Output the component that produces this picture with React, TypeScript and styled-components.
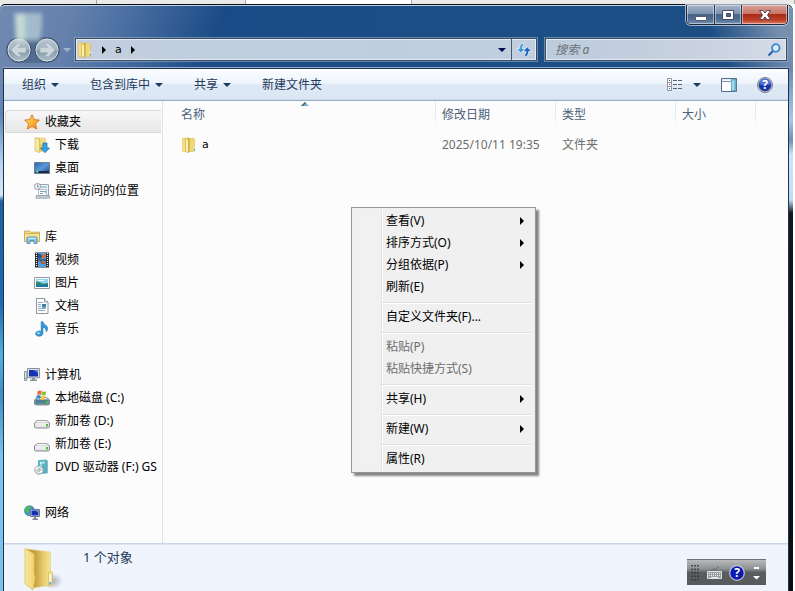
import React from "react";
import styled, { createGlobalStyle, css } from "styled-components";

const GlobalStyle = createGlobalStyle`
  * { box-sizing: border-box; }
  html, body { margin: 0; padding: 0; }
  body {
    background: #ffffff;
    color: #000;
    font: 12px/16px "Noto Sans", "Noto Sans CJK SC", sans-serif;
    overflow: hidden;
  }
  button, input { font: inherit; color: inherit; margin: 0; padding: 0; border: 0; background: none; }
  svg { display: block; flex: none; }
  ul { list-style: none; margin: 0; padding: 0; }
`;

/* ---------- frame ---------- */

const Page = styled.div`
  display: flex;
  flex-direction: column;
  height: 100vh;
`;

const TabStrip = styled.div`
  display: flex;
  height: 4px;
  flex: none;
  background: #e2e2e0;
`;

const StripTab = styled.div<{ $grow: number; $active?: boolean }>`
  flex: ${(p) => p.$grow} 1 0;
  border-right: 1px solid #a5a5a5;
  background: ${(p) => (p.$active ? "#ffffff" : "#e9e9e7")};
`;

const WindowFrame = styled.div`
  position: relative;
  flex: 1;
  min-height: 0;
  display: flex;
  flex-direction: column;
  margin-right: 2px;
  padding: 0 4px 0 3px;
  border-top: 1px solid #060d18;
  border-radius: 5px 7px 0 0;
  box-shadow: inset 0 1px 0 #c4d5e6;
  background:
    linear-gradient(to bottom, transparent 64px, #6c8ab0 64px, #5f86b4 110px, #b9d5f2 160px, #d5e8fa 190px, #1d60a0 196px, #1d6cb0 300px, #54b0de 350px, #3d8fc4 390px, #78c4ea 450px, #78c4ea) left / 3px 100% no-repeat,
    linear-gradient(to bottom, transparent 64px, #6d8bb0 64px, #a9c8e8 115px, #6d90b8 135px, #cfe4fa 150px, #c2dcf5 195px, #101820 208px, #0a0f14) right / 4px 100% no-repeat,
    linear-gradient(65deg, transparent 62%, rgba(150, 165, 190, 0.75) 90%) right top / 220px 68px no-repeat,
    linear-gradient(108deg, #7089b0 0, #6681ac 70px, #4a6fa2 125px, #1b4b86 215px, #1c4f86 60%, #1b4c80 100%);
`;

const GlassGhost = styled.svg`
  position: absolute;
  left: 8px;
  top: 6px;
  filter: blur(2px);
`;

const TitleBar = styled.div`
  display: flex;
  justify-content: flex-end;
  height: 32px;
  flex: none;
`;

const CaptionGroup = styled.div`
  display: flex;
  height: 20px;
  margin-right: 1px;
  border: 1px solid #1d2a3d;
  border-top: 0;
  border-radius: 0 0 5px 5px;
  overflow: hidden;
  box-shadow: 0 0 0 1px rgba(215, 228, 242, 0.7);
`;

const CaptionButton = styled.button<{ $close?: boolean }>`
  display: flex;
  align-items: center;
  justify-content: center;
  width: ${(p) => (p.$close ? 46 : 27)}px;
  box-shadow: inset 0 0 0 1px rgba(255, 255, 255, 0.45);
  background: ${(p) =>
    p.$close
      ? "linear-gradient(#d9a299, #c87466 45%, #a92c18 50%, #bd4026 80%, #dd8266)"
      : "linear-gradient(#a5b5c9, #7d93af 45%, #48658a 50%, #4d6c91 75%, #7893b2)"};
  & + & { border-left: 1px solid #24364f; }
`;

const AddressRow = styled.div`
  display: flex;
  align-items: center;
  height: 25px;
  margin-bottom: 6px;
  padding-left: 3px;
  flex: none;
`;

const NavButtons = styled.div`
  display: flex;
  align-items: center;
  gap: 2px;
  border-radius: 13px;
  background: rgba(40, 62, 95, 0.35);
  margin-right: 3px;
`;

const RoundButton = styled.button`
  width: 26px;
  height: 26px;
  padding: 0;
`;

const RecentButton = styled.button`
  width: 9px;
  margin-right: 3px;
`;

const GlassField = styled.div<{ $grow: number }>`
  display: flex;
  align-items: stretch;
  flex: ${(p) => p.$grow} 1 0;
  min-width: 0;
  height: 23px;
  border: 1px solid #3a4c63;
  box-shadow: inset 0 0 0 1px #e4ebf2, 0 0 0 1px rgba(160, 185, 210, 0.55);
  background: linear-gradient(to right, #c4cede, #bfcfdf 35%, #c0cede);
`;

const SearchField = styled(GlassField)`
  margin-left: 8px;
  margin-right: 2px;
  padding: 0 5px 0 9px;
  align-items: center;
  background: linear-gradient(to right, #bccbdc, #c8d1df 60%, #d5dbe7);
`;

const SearchInput = styled.input`
  flex: 1;
  min-width: 0;
  outline: 0;
  &::placeholder { color: #6c7076; opacity: 1; font-style: italic; }
`;

const Crumbs = styled.nav`
  display: flex;
  align-items: center;
  flex: 1;
  padding-left: 1px;
  gap: 9px;
`;

const Crumb = styled.button`
  display: flex;
  align-items: center;
  font-family: "DejaVu Sans", sans-serif;
  font-size: 11px;
`;

const FieldButton = styled.button<{ $divided?: boolean }>`
  display: flex;
  align-items: center;
  justify-content: center;
  width: ${(p) => (p.$divided ? 25 : 18)}px;
  border-left: ${(p) => (p.$divided ? "1px solid #4b5a70" : "0")};
`;

/* ---------- client area ---------- */

const Client = styled.div`
  flex: 1;
  min-height: 0;
  display: flex;
  flex-direction: column;
  border: 1px solid #22324b;
  border-bottom: 0;
  background: #fcfcfc;
  box-shadow: 0 -1px 0 #93aed0;
`;

const Toolbar = styled.div`
  display: flex;
  align-items: center;
  height: 32px;
  flex: none;
  padding: 0 15px 0 18px;
  gap: 31px;
  border-bottom: 1px solid #9aaccb;
  box-shadow: inset 0 -1px 0 #ccd9ea;
  background: linear-gradient(#fbfdff, #edf4fc 47%, #dfe9f6 50%, #dbe6f4);
  color: #1e395b;
`;

const ToolButton = styled.button`
  display: flex;
  align-items: center;
  gap: 5px;
  white-space: nowrap;
`;

const ToolTail = styled.div`
  display: flex;
  align-items: center;
  gap: 20px;
  margin-left: auto;
`;

const ViewButton = styled(ToolButton)`
  gap: 10px;
`;

const Panes = styled.div`
  display: flex;
  flex: 1;
  min-height: 0;
`;

const Sidebar = styled.nav`
  display: flex;
  flex-direction: column;
  gap: 23px;
  width: 159px;
  flex: none;
  padding: 9px 1px 0 1px;
  border-right: 1px solid #d6e5f5;
  overflow: hidden;
`;

const NavLink = styled.a<{ $child?: boolean; $current?: boolean }>`
  display: flex;
  align-items: center;
  gap: 5px;
  height: 23px;
  padding-left: ${(p) => (p.$child ? 29 : 19)}px;
  color: #000;
  text-decoration: none;
  white-space: nowrap;
  overflow: hidden;
  ${(p) =>
    p.$current &&
    css`
      border-radius: 3px 0 0 3px;
      box-shadow: inset 1px 1px 0 #d9d9d9, inset 0 -1px 0 #d9d9d9;
      background: linear-gradient(#f8f8f8, #e6e6e6);
    `}
`;

const FilePane = styled.main`
  flex: 1;
  min-width: 0;
`;

const FileTable = styled.table`
  width: 100%;
  table-layout: fixed;
  border-collapse: collapse;
`;

const Col = styled.col<{ $w?: number }>`
  width: ${(p) => (p.$w ? `${p.$w}px` : "auto")};
`;

const HeadCell = styled.th<{ $first?: boolean }>`
  height: 28px;
  padding: 0 0 0 ${(p) => (p.$first ? 18 : 7)}px;
  text-align: left;
  font-weight: 400;
  color: #4c607a;
  background: ${(p) =>
    p.$first ? "none" : "linear-gradient(#dce8f5, #e4edf7 70%, #fcfcfc) left top / 1px 24px no-repeat"};
`;

const SortLabel = styled.div`
  display: grid;
  grid-template-columns: 1fr auto 1fr;
  align-items: start;
  height: 28px;
  margin-left: -6px;
  & > span { padding: 6px 0 0 6px; }
  & > svg { margin-top: 1px; }
`;

const DataCell = styled.td<{ $first?: boolean }>`
  height: 32px;
  padding: 0 0 0 ${(p) => (p.$first ? 18 : 7)}px;
  color: ${(p) => (p.$first ? "#000" : "#6d6d6d")};
  white-space: nowrap;
`;

const FileName = styled.a`
  display: flex;
  align-items: center;
  gap: 5px;
  color: #000;
  text-decoration: none;
  font-family: "DejaVu Sans", sans-serif;
  font-size: 11px;
`;

const StatusBar = styled.footer`
  display: flex;
  align-items: flex-start;
  height: 48px;
  flex: none;
  padding: 3px 22px 0 18px;
  border-top: 1px solid #cad6e7;
  box-shadow: inset 0 1px 0 #dde6f2;
  background: #f0f4fc;
  color: #1e395b;
  font-size: 13px;
  line-height: 20px;
  overflow: hidden;
`;

const StatusText = styled.span`
  margin-left: 19px;
`;

const LanguageBar = styled.div`
  display: flex;
  align-items: center;
  gap: 7px;
  width: 79px;
  height: 26px;
  margin: 12px 0 0 auto;
  padding: 0 6px 0 4px;
  border-top: 1px solid #6f7375;
  background: linear-gradient(#b8babb, #8f9293 35%, #5a5e60 50%, #565a5c);
`;

const LanguageButton = styled.button`
  display: flex;
  &:last-child { margin-left: auto; }
`;

/* ---------- context menu ---------- */

const ContextMenu = styled.div`
  position: absolute;
  left: 351px;
  top: 202px;
  width: 185px;
  padding: 2px;
  border: 1px solid #979797;
  background: linear-gradient(to right, #f1f1f1 27px, #e2e3e3 27px, #e2e3e3 28px, #ffffff 28px, #ffffff 29px, #f0f0f0 29px);
  background-origin: content-box;
  background-clip: padding-box;
  background-repeat: no-repeat;
  background-color: #f0f0f0;
  box-shadow: 3px 3px 2px rgba(0, 0, 0, 0.48);
`;

const MenuItem = styled.button`
  display: flex;
  align-items: center;
  justify-content: space-between;
  width: 100%;
  height: 22px;
  padding: 0 9px 0 32px;
  text-align: left;
  white-space: nowrap;
  &:disabled { color: #6d6d6d; }
`;

const MenuRule = styled.hr`
  height: 8px;
  margin: 0 0 0 28px;
  border: 0;
  background: linear-gradient(transparent 4px, #e0e0e0 4px, #e0e0e0 5px, #ffffff 5px, #ffffff 6px, transparent 6px);
`;

/* ---------- drawings ---------- */

const Down = ({ w = 8, fill = "#1e395b" }: { w?: number; fill?: string }) => (
  <svg width={w} height="4" viewBox="0 0 8 4" aria-hidden>
    <path d="M0 0h8L4 4z" fill={fill} />
  </svg>
);

const Right = ({ fill = "#000" }: { fill?: string }) => (
  <svg width="4" height="8" viewBox="0 0 4 8" aria-hidden>
    <path d="M0 0v8l4-4z" fill={fill} />
  </svg>
);

const FolderIcon = ({ size = 16 }: { size?: number }) => (
  <svg width={size} height={size} viewBox="0 0 16 16" aria-hidden>
    <path d="M1.500 1.200 7 .8v14.400l-5.500-1z" fill="#f4df83" stroke="#d9bd55" strokeWidth=".5" />
    <path d="M7 1l6.500.4v12.800l-6.500 1z" fill="#c9a741" />
    <path d="M4.500 1.500 7.500 3v12.700l-3-1.400z" fill="#fff1a9" stroke="#b99835" strokeWidth=".5" />
    <path d="M8.600 1.200l4.700.4v12.500l-4.700.9z" fill="#efd776" />
    <path d="M12.700 9.500h1.600v4.300l-1.600.4z" fill="#f8e8a0" />
    <path d="M12.800 11.800H14v2h-1.200z" fill="#4ca8e4" />
  </svg>
);

const Circle = ({ flip }: { flip?: boolean }) => {
  const id = flip ? "fwd" : "back";
  return (
    <svg width="26" height="26" viewBox="0 0 26 26" aria-hidden>
      <defs>
        <linearGradient id={id} x1="0" y1="0" x2="0" y2="1">
          <stop offset="0" stopColor="#bcc8d2" />
          <stop offset=".48" stopColor="#a3b3c0" />
          <stop offset=".52" stopColor="#8498a9" />
          <stop offset="1" stopColor="#b0c2cb" />
        </linearGradient>
      </defs>
      <circle cx="13" cy="13" r="12" fill={`url(#${id})`} stroke="#374b67" />
      <circle cx="13" cy="13" r="11" fill="none" stroke="#dce5eb" strokeOpacity=".8" />
      <path
        d="M5 13 11.500 6.500h3.900L12 10.500h8v5h-8l3.400 4h-3.900z"
        fill="#ccd6dc"
        stroke="#a3b3bf"
        strokeWidth=".6"
        transform={flip ? "matrix(-1 0 0 1 26 0)" : undefined}
      />
    </svg>
  );
};

const RefreshIcon = () => (
  <svg width="16" height="16" viewBox="0 0 16 16" aria-hidden>
    <path d="M3.500 6.500C3.500 3.500 4.800 1.600 7.500 1v2.300C6.500 4 6.300 5 6.300 6.500h2.900L5 11.200.6 6.500z" fill="#3e9bd8" stroke="#eff6fb" strokeWidth=".7" />
    <path d="M12.700 9.500c0 3-1.300 4.900-4 5.500v-2.300c1-.7 1.200-1.700 1.200-3.200H7L11.200 4.800l4.400 4.700z" fill="#2464ba" stroke="#eff6fb" strokeWidth=".7" />
  </svg>
);

const SearchIcon = () => (
  <svg width="14" height="14" viewBox="0 0 14 14" fill="none" aria-hidden>
    <path d="M6.500 7.500 1.500 12.500" stroke="#2b5fae" strokeWidth="2.2" />
    <circle cx="8.800" cy="5" r="3.800" fill="#dceaf6" stroke="#3a8bd0" strokeWidth="1.800" />
  </svg>
);

const MinimizeIcon = () => (
  <svg width="14" height="14" viewBox="0 0 14 14" aria-hidden>
    <rect x="1.500" y="8.500" width="11" height="4" rx=".5" fill="#fff" stroke="#545870" />
  </svg>
);

const MaximizeIcon = () => (
  <svg width="14" height="14" viewBox="0 0 14 14" aria-hidden>
    <path d="M1.500 2.500h11v9h-11zM5.500 5.500v3h4v-3z" fill="#fff" fillRule="evenodd" stroke="#454c65" />
  </svg>
);

const CloseIcon = () => (
  <svg width="14" height="12" viewBox="0 0 14 12" aria-hidden>
    <path d="M1.500 1.500h3.500L7 4l2-2.500h3.500L9.500 6l3 4.500H9L7 8l-2 2.500H1.500L4.500 6z" fill="#fff" stroke="#5b4656" />
  </svg>
);

const ViewIcon = () => (
  <svg width="16" height="14" viewBox="0 0 16 14" fill="none" aria-hidden>
    <path d="M.5.5h4v4h-4zM.5 4.500h4v4h-4zM.5 8.500h4v4h-4z" fill="#fff" stroke="#8b95a3" />
    <path d="M2 2h1v1H2z" fill="#2f7f50" />
    <path d="M2 6h1v1H2z" fill="#c72b26" />
    <path d="M2 10h1v1H2z" fill="#276ba8" />
    <path d="M6 2.500h4M11 2.500h4M6 6.500h4M11 6.500h4M6 10.500h4M11 10.500h4" stroke="#56647a" />
  </svg>
);

const PreviewIcon = () => (
  <svg width="16" height="14" viewBox="0 0 16 14" aria-hidden>
    <path d="M.5.5h15v13H.5z" fill="#fff" stroke="#566d8b" />
    <path d="M1 1h14v1.500H1z" fill="#e0ebf4" />
    <path d="M1 3.500h9" stroke="#7f95ad" />
    <path d="M10.500 1.500h4.500v11.500h-4.500z" fill="#78c4de" stroke="#4f91ac" strokeWidth=".7" />
    <path d="M11.500 3h1.200v9h-1.200z" fill="#bde8f3" />
  </svg>
);

const QuestionMark = styled.text`
  font: 700 12px "Noto Sans", sans-serif;
  fill: #fff;
  text-anchor: middle;
`;

const HelpIcon = ({ rim = "#7c828e" }: { rim?: string }) => (
  <svg width="16" height="16" viewBox="0 0 16 16" aria-hidden>
    <circle cx="8" cy="8" r="7.500" fill="#c8ced8" stroke={rim} />
    <circle cx="8" cy="8" r="6" fill="#1837ad" stroke="#13226f" strokeWidth=".6" />
    <path d="M2.400 7a5.600 5.600 0 0 1 11.200 0C11 8.500 5 8.500 2.400 7z" fill="#526fd5" />
    <QuestionMark x="8" y="12">?</QuestionMark>
  </svg>
);

const LanguageHelpIcon = () => (
  <svg width="16" height="16" viewBox="0 0 16 16" aria-hidden>
    <circle cx="8" cy="8" r="7.300" fill="#0a18b4" stroke="#c3c7d2" strokeWidth="1.200" />
    <QuestionMark x="8" y="12">?</QuestionMark>
  </svg>
);

const StarIcon = () => (
  <svg width="16" height="16" viewBox="0 0 16 16" aria-hidden>
    <defs>
      <linearGradient id="star" x1="0" y1="0" x2="1" y2="1">
        <stop offset="0" stopColor="#fff08a" />
        <stop offset=".55" stopColor="#fbb133" />
        <stop offset="1" stopColor="#f07c1b" />
      </linearGradient>
    </defs>
    <path d="M8 .8l2.200 4.800 5.200.6-3.900 3.500 1.100 5.300L8 12.300 3.400 15l1.100-5.300L.6 6.200l5.200-.6z" fill="url(#star)" stroke="#d9731d" strokeWidth=".9" />
  </svg>
);

const DownloadIcon = () => (
  <svg width="16" height="16" viewBox="0 0 16 16" aria-hidden>
    <path d="M1 .8h11v13l-7 1.500L1 14z" fill="#e5c969" />
    <path d="M1 .8 5.500 2v13.700L1 14z" fill="#f9ea9b" stroke="#c9aa4b" strokeWidth=".5" />
    <path d="M6 1h6v6H6z" fill="#efda86" />
    <path d="M9 6h4v5h2.500L11 15.700 6.500 11H9z" fill="#35a3e6" stroke="#1768a8" strokeWidth=".7" />
  </svg>
);

const DesktopIcon = () => (
  <svg width="16" height="16" viewBox="0 0 16 16" aria-hidden>
    <defs>
      <linearGradient id="desk" x1="0" y1="0" x2="1" y2="1">
        <stop offset="0" stopColor="#2462b0" />
        <stop offset=".5" stopColor="#5b98da" />
        <stop offset="1" stopColor="#174387" />
      </linearGradient>
    </defs>
    <path d="M.5 2.500h15v11H.5z" fill="url(#desk)" stroke="#6b7f99" />
    <path d="M1 11h14v2H1z" fill="#1f2c40" />
    <circle cx="3" cy="11" r="1.900" fill="#3b9cd6" />
    <path d="M2 10h1v1H2z" fill="#e96b36" />
    <path d="M3 11h1v1H3z" fill="#f8d447" />
  </svg>
);

const RecentIcon = () => (
  <svg width="16" height="16" viewBox="0 0 16 16" aria-hidden>
    <path d="M5.500 1.500h9v11h-9z" fill="#f2f5f7" stroke="#9aa4ad" />
    <path d="M4.500 6.500h8v6h-8z" fill="#fff" stroke="#a2acb4" strokeWidth=".8" />
    <path d="M7 4h6M6 8.500h4M6 10.500h3" stroke="#68a1c4" />
    <path d="M10.500 8h1.500v1.500h-1.500z" fill="#3f94c8" />
    <path d="M2 12.500h13.500v2.800H2z" fill="#c3cacf" stroke="#89929a" strokeWidth=".6" />
    <circle cx="3.500" cy="3.500" r="3" fill="#f8fafb" stroke="#8d989f" />
    <path d="M3.500 1.800v2H5" stroke="#59636a" fill="none" strokeWidth=".8" />
  </svg>
);

const LibraryIcon = () => (
  <svg width="16" height="16" viewBox="0 0 16 16" aria-hidden>
    <path d="M.5 2h5l1 1.200h9v9.300H.5z" fill="#f4e28f" stroke="#bf9d45" strokeWidth=".8" />
    <path d="M1 4.500h14" stroke="#d2b65c" />
    <path d="M3 14.500V9.200C3 8.500 3.500 8 4.200 8h7.600c.7 0 1.200.5 1.200 1.200v5.300h-3v-3H6v3z" fill="#86c9ed" stroke="#3f86b5" strokeWidth=".8" />
    <path d="M4.300 9.300h7.400" stroke="#d9f2fc" />
  </svg>
);

const VideoIcon = () => (
  <svg width="16" height="16" viewBox="0 0 16 16" aria-hidden>
    <path d="M1 .5h14v15H1z" fill="#26292c" />
    <path d="M2.500 1v14M13.500 1v14" stroke="#f3f3f3" strokeWidth="1.200" strokeDasharray="1 1" />
    <path d="M4 1h8v6.500H4zM4 8.500h8V15H4z" fill="#4aa0e4" />
    <path d="M4 1.500l3 1 1.500 2L6 7 4 6z" fill="#24508b" />
    <path d="M8 3l3-1.500 1 2L10.500 6l-3 1z" fill="#d86a36" />
    <path d="M5 8.500h2l2 2 3-1.500v2L9 12.500l-3-2z" fill="#a95846" />
  </svg>
);

const PictureIcon = () => (
  <svg width="16" height="16" viewBox="0 0 16 16" aria-hidden>
    <path d="M.5 2.500h15v11H.5z" fill="#fff" stroke="#929aa1" />
    <path d="M2 4h12v8H2z" fill="#8fd5f2" />
    <path d="M2 6.500c3 0 5 1 7 2.300l5-.8V12H2z" fill="#35875f" />
    <path d="M2 9.500c4 .5 8 .3 12-.5v3H2z" fill="#1d76a0" />
    <path d="M4 5.500h6" stroke="#eafaff" />
  </svg>
);

const DocumentIcon = () => (
  <svg width="16" height="16" viewBox="0 0 16 16" aria-hidden>
    <path d="M2.500.5h8l3.500 3.500v11.500H2.500z" fill="#fff" stroke="#8e979f" />
    <path d="M10.500.5v3.500H14" fill="#e2e8ec" stroke="#8e979f" />
    <path d="M4 4.500h5M4 6.500h3M4 8.500h3M4 10.500h8M4 12.500h7" stroke="#93a3c8" />
    <path d="M8 6h4v3.500H8z" fill="#3978b7" />
    <path d="M8 8.500h4v1H8z" fill="#52a48d" />
  </svg>
);

const MusicIcon = () => (
  <svg width="16" height="16" viewBox="0 0 16 16" aria-hidden>
    <path d="M7.200.8h1.700c.3 2.800 4.600 3.400 4.700 6.500 0 1.700-.8 2.700-1.500 3.500.5-2.700-1.300-4.100-3.200-4.500v6.200c0 1.600-1.700 2.700-3.700 2.700S1.600 14.100 1.600 12.700s1.700-2.700 3.600-2.700c.8 0 1.500.2 2 .5z" fill="#3298df" stroke="#176bac" strokeWidth=".6" />
    <ellipse cx="4.500" cy="12.200" rx="1.600" ry="1" fill="#a7dcf7" />
  </svg>
);

const ComputerIcon = () => (
  <svg width="16" height="16" viewBox="0 0 16 16" aria-hidden>
    <path d="M.5 4.500h2.300v9H.5z" fill="#dce0e4" stroke="#78838c" strokeWidth=".8" />
    <path d="M1 11h1v1H1z" fill="#4ab43e" />
    <path d="M3.500 1.500h12v9.300h-12z" fill="#dce1e8" stroke="#8a919b" />
    <path d="M5 3h9v6.500H5z" fill="#1631af" />
    <path d="M9 3h5v3z" fill="#587be0" />
    <path d="M8 11h3v1.500h2V14H6v-1.500h2z" fill="#8b969f" />
  </svg>
);

const DriveIcon = ({ system }: { system?: boolean }) => (
  <svg width="16" height="16" viewBox="0 0 16 16" aria-hidden>
    <path d="M3 7.500h10l2.500 2.500v4l-1 1h-13l-1-1v-4z" fill={system ? "#87a8b6" : "#d9d9dc"} stroke="#73767b" strokeWidth=".8" />
    <path d="M1.500 10h13v3.800h-13z" fill={system ? "#527f91" : "#ececef"} />
    <path d="M3 8.300h10" stroke="#fff" />
    <path d="M12 11h2v2.500h-2z" fill="#4fbd39" />
    {system && (
      <>
        <path d="M3.800 1c1.400-.8 2.600-.7 4 0L7 4.700c-1.200-.7-2.700-.7-4 0z" fill="#ed6430" />
        <path d="M8.300 1.300c1.400.7 2.700.7 4 0l-.8 3.700c-1.300.8-2.700.7-4 .1z" fill="#84bd37" />
        <path d="M2.800 5.400c1.300-.7 2.700-.7 4 0L6 9c-1.300-.6-2.700-.6-4 0z" fill="#368bd2" />
        <path d="M7.300 5.800c1.300.6 2.700.7 4 0l-.8 3.500c-1.300.7-2.700.7-4 0z" fill="#f7c936" />
      </>
    )}
  </svg>
);

const DvdIcon = () => (
  <svg width="16" height="16" viewBox="0 0 16 16" aria-hidden>
    <path d="M4 1.300 12.500.5v14L4 15.300z" fill="#53b6c5" />
    <path d="M12.500.5 13.500 2v12l-1 .5z" fill="#247a92" />
    <path d="M6 3l2-.2v2L6 5zM8.500 2.700l2-.2v2l-2 .2zM6 5.600l2-.2v2l-2 .2z" fill="#d9f5f5" />
    <circle cx="5" cy="11" r="4.300" fill="#dce1e3" stroke="#848e94" strokeWidth=".7" />
    <path d="M5 11 1.500 9.500l1.200-1.800zM5 11l3.500 1.400-1.200 1.900z" fill="#f9fcfc" />
    <circle cx="5" cy="11" r="1.200" fill="#fff" stroke="#79848a" strokeWidth=".7" />
  </svg>
);

const NetworkIcon = () => (
  <svg width="16" height="16" viewBox="0 0 16 16" aria-hidden>
    <circle cx="5.500" cy="5.800" r="5" fill="#3a93dc" stroke="#23679e" strokeWidth=".6" />
    <path d="M1 5c1-3 3-4 5.500-4L7 3 4.500 4.500 5 7 2.500 8zM6 7l3-1-1 4H5z" fill="#54bd49" />
    <path d="M6.500 4.500h9v7h-9z" fill="#dae0eb" stroke="#6d7991" />
    <path d="M7.500 5.500h7v5h-7z" fill="#152db0" />
    <path d="M11 5.500h3.500v2.300z" fill="#6583e1" />
    <path d="M10 12h2v1.500h2V15H8.500v-1.500H10z" fill="#7b8798" />
  </svg>
);

const BigFolder = () => (
  <svg width="42" height="44" viewBox="0 0 42 44" aria-hidden>
    <defs>
      <linearGradient id="leaf">
        <stop offset="0" stopColor="#f7e89c" />
        <stop offset="1" stopColor="#efd26a" />
      </linearGradient>
      <linearGradient id="backleaf">
        <stop offset="0" stopColor="#b8922f" />
        <stop offset=".4" stopColor="#c8a444" />
        <stop offset=".75" stopColor="#ead071" />
        <stop offset="1" stopColor="#f5e49a" />
      </linearGradient>
      <radialGradient id="shade">
        <stop offset="0" stopColor="#6f7a89" stopOpacity=".6" />
        <stop offset="1" stopColor="#6f7a89" stopOpacity="0" />
      </radialGradient>
    </defs>
    <ellipse cx="30" cy="34" rx="11" ry="8" fill="url(#shade)" />
    <path d="M4 2 28.500 5v33L11 41z" fill="url(#backleaf)" stroke="#e5cc75" strokeWidth=".6" />
    <path d="M3 1.500 12 7v20l1 3-2 13L3 37z" fill="url(#leaf)" stroke="#dec164" strokeWidth=".8" />
    <path d="M26.500 26c0-2 4-2 4 0v12l-4 1z" fill="#f4df8f" stroke="#d6b857" strokeWidth=".7" />
    <path d="M28 27v9" stroke="#fff" strokeWidth="1.500" />
    <path d="M27.300 35h2v2.500h-2z" fill="#54a7e8" />
  </svg>
);

const GripIcon = () => (
  <svg width="9" height="18" viewBox="0 0 9 18" aria-hidden>
    <path d="M1 1v17M4 1v17M7 1v17" stroke="#303436" strokeWidth="1.500" strokeDasharray="1.500 2" />
  </svg>
);

const KeyboardIcon = () => (
  <svg width="15" height="14" viewBox="0 0 15 14" fill="none" aria-hidden>
    <path d="M4 5c2-4 4 0 6-3l2-1" stroke="#6b6e70" />
    <path d="M.5 5.500h14v7H.5z" fill="#9a9c9d" stroke="#e1e2e2" />
    <path d="M2 7.500h11M2 9.500h11" stroke="#eeeeee" strokeDasharray="1 1" />
    <path d="M4 11.500h7" stroke="#eeeeee" />
  </svg>
);

const OptionsIcon = () => (
  <svg width="7" height="14" viewBox="0 0 7 14" aria-hidden>
    <path d="M1 1h5v2H1zM0 10h7l-3.500 3.500z" fill="#fff" />
  </svg>
);

/* ---------- data ---------- */

type NavEntry = { label: string; icon: React.ReactNode };
type NavGroup = { head: NavEntry; current?: boolean; items: NavEntry[] };

const navGroups: NavGroup[] = [
  {
    head: { label: "收藏夹", icon: <StarIcon /> },
    current: true,
    items: [
      { label: "下载", icon: <DownloadIcon /> },
      { label: "桌面", icon: <DesktopIcon /> },
      { label: "最近访问的位置", icon: <RecentIcon /> },
    ],
  },
  {
    head: { label: "库", icon: <LibraryIcon /> },
    items: [
      { label: "视频", icon: <VideoIcon /> },
      { label: "图片", icon: <PictureIcon /> },
      { label: "文档", icon: <DocumentIcon /> },
      { label: "音乐", icon: <MusicIcon /> },
    ],
  },
  {
    head: { label: "计算机", icon: <ComputerIcon /> },
    items: [
      { label: "本地磁盘 (C:)", icon: <DriveIcon system /> },
      { label: "新加卷 (D:)", icon: <DriveIcon /> },
      { label: "新加卷 (E:)", icon: <DriveIcon /> },
      { label: "DVD 驱动器 (F:) GS", icon: <DvdIcon /> },
    ],
  },
  { head: { label: "网络", icon: <NetworkIcon /> }, items: [] },
];

type MenuEntry = { label: string; sub?: boolean; disabled?: boolean };

const menuGroups: MenuEntry[][] = [
  [
    { label: "查看(V)", sub: true },
    { label: "排序方式(O)", sub: true },
    { label: "分组依据(P)", sub: true },
    { label: "刷新(E)" },
  ],
  [{ label: "自定义文件夹(F)..." }],
  [
    { label: "粘贴(P)", disabled: true },
    { label: "粘贴快捷方式(S)", disabled: true },
  ],
  [{ label: "共享(H)", sub: true }],
  [{ label: "新建(W)", sub: true }],
  [{ label: "属性(R)" }],
];

export default function App() {
  return (
    <Page>
      <GlobalStyle />
      <TabStrip>
        <StripTab $grow={96} />
        <StripTab $grow={149} />
        <StripTab $grow={166} $active />
        <StripTab $grow={384} />
      </TabStrip>
      <WindowFrame>
        <GlassGhost width="40" height="34" viewBox="0 0 40 34" aria-hidden>
          <path d="M6 2h28v14l-2 14H8z" fill="#b5cdd5" fillOpacity=".75" />
          <path d="M8 3h9v28H8z" fill="#d5e6dc" fillOpacity=".7" />
        </GlassGhost>
        <TitleBar>
          <CaptionGroup>
            <CaptionButton aria-label="最小化"><MinimizeIcon /></CaptionButton>
            <CaptionButton aria-label="最大化"><MaximizeIcon /></CaptionButton>
            <CaptionButton $close aria-label="关闭"><CloseIcon /></CaptionButton>
          </CaptionGroup>
        </TitleBar>
        <AddressRow>
          <NavButtons>
            <RoundButton aria-label="后退"><Circle /></RoundButton>
            <RoundButton aria-label="前进"><Circle flip /></RoundButton>
          </NavButtons>
          <RecentButton aria-label="最近的页面"><Down fill="#9fb4cf" /></RecentButton>
          <GlassField $grow={461}>
            <Crumbs aria-label="地址">
              <FolderIcon />
              <Crumb aria-label="展开"><Right /></Crumb>
              <Crumb>a</Crumb>
              <Crumb aria-label="展开 a"><Right /></Crumb>
            </Crumbs>
            <FieldButton aria-label="以前的位置"><Down fill="#05055a" /></FieldButton>
            <FieldButton $divided aria-label="刷新"><RefreshIcon /></FieldButton>
          </GlassField>
          <SearchField $grow={226}>
            <SearchInput type="text" placeholder="搜索 a" aria-label="搜索 a" />
            <SearchIcon />
          </SearchField>
        </AddressRow>

        <Client>
          <Toolbar>
            <ToolButton>组织<Down /></ToolButton>
            <ToolButton>包含到库中<Down /></ToolButton>
            <ToolButton>共享<Down /></ToolButton>
            <ToolButton>新建文件夹</ToolButton>
            <ToolTail>
              <ViewButton aria-label="更改您的视图"><ViewIcon /><Down /></ViewButton>
              <ToolButton aria-label="显示预览窗格"><PreviewIcon /></ToolButton>
              <ToolButton aria-label="帮助"><HelpIcon /></ToolButton>
            </ToolTail>
          </Toolbar>

          <Panes>
            <Sidebar>
              {navGroups.map((group) => (
                <div key={group.head.label}>
                  <NavLink href="#" $current={group.current}>
                    {group.head.icon}
                    {group.head.label}
                  </NavLink>
                  {group.items.map((item) => (
                    <NavLink href="#" $child key={item.label}>
                      {item.icon}
                      {item.label}
                    </NavLink>
                  ))}
                </div>
              ))}
            </Sidebar>
            <FilePane>
              <FileTable>
                <colgroup>
                  <Col $w={272} />
                  <Col $w={120} />
                  <Col $w={120} />
                  <Col $w={80} />
                  <Col />
                </colgroup>
                <thead>
                  <tr>
                    <HeadCell $first>
                      <SortLabel>
                        <span>名称</span>
                        <svg width="8" height="4" viewBox="0 0 8 4" aria-hidden>
                          <path d="M4 0 0 4h8z" fill="#7cb4d0" />
                          <path d="M4 0 0 4h2l3-3z" fill="#3c5e72" />
                        </svg>
                      </SortLabel>
                    </HeadCell>
                    <HeadCell>修改日期</HeadCell>
                    <HeadCell>类型</HeadCell>
                    <HeadCell>大小</HeadCell>
                    <HeadCell />
                  </tr>
                </thead>
                <tbody>
                  <tr>
                    <DataCell $first>
                      <FileName href="#"><FolderIcon />a</FileName>
                    </DataCell>
                    <DataCell>2025/10/11 19:35</DataCell>
                    <DataCell>文件夹</DataCell>
                    <DataCell />
                    <DataCell />
                  </tr>
                </tbody>
              </FileTable>
            </FilePane>
          </Panes>

          <StatusBar>
            <BigFolder />
            <StatusText>1 个对象</StatusText>
            <LanguageBar>
              <GripIcon />
              <LanguageButton aria-label="键盘"><KeyboardIcon /></LanguageButton>
              <LanguageButton aria-label="输入法帮助"><LanguageHelpIcon /></LanguageButton>
              <LanguageButton aria-label="选项"><OptionsIcon /></LanguageButton>
            </LanguageBar>
          </StatusBar>
        </Client>

        <ContextMenu role="menu">
          {menuGroups.map((group, index) => (
            <React.Fragment key={group[0].label}>
              {index > 0 && <MenuRule />}
              {group.map((item) => (
                <MenuItem key={item.label} role="menuitem" disabled={item.disabled}>
                  {item.label}
                  {item.sub && <Right />}
                </MenuItem>
              ))}
            </React.Fragment>
          ))}
        </ContextMenu>
      </WindowFrame>
    </Page>
  );
}
